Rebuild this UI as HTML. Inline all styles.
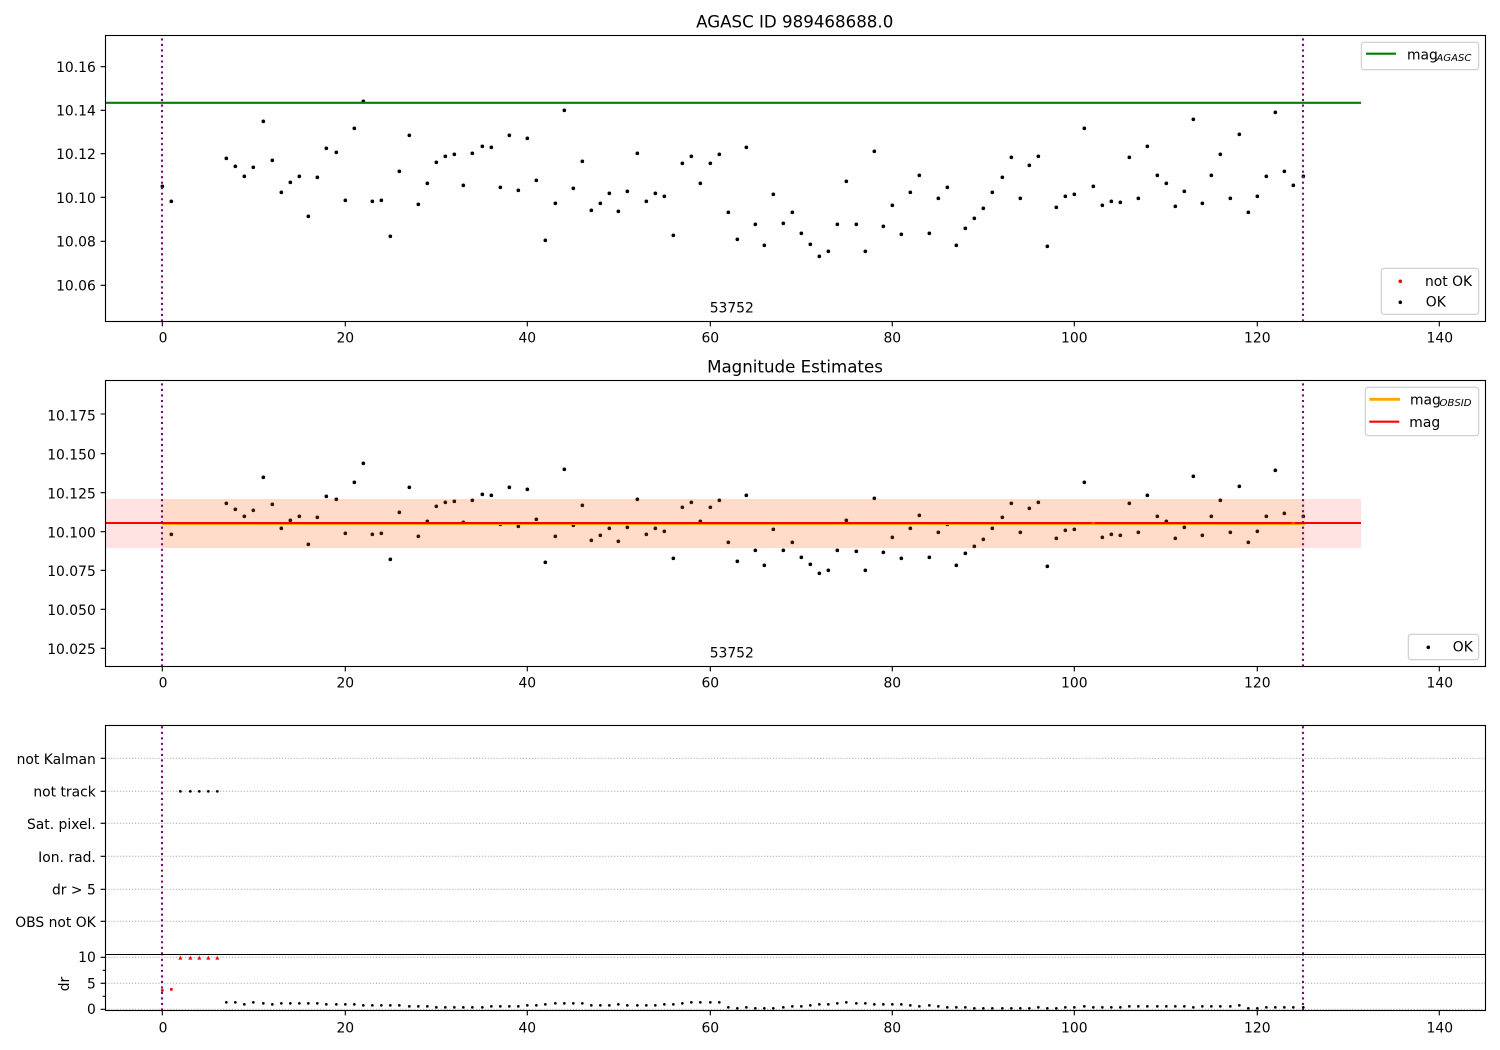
<!DOCTYPE html>
<html>
<head>
<meta charset="utf-8">
<style>
html,body{margin:0;padding:0;background:#fff;}
svg{display:block;}
text{font-family:"DejaVu Sans","Liberation Sans",sans-serif;font-size:13.89px;fill:#000;}
.t{font-size:16.67px;text-anchor:middle;}
.x{text-anchor:middle;}
.y{text-anchor:end;}
.s{font-size:10.1px;font-style:italic;}
.d{fill:none;stroke:#000;stroke-linecap:round;stroke-width:11;}
.d2{fill:none;stroke:#000;stroke-linecap:round;stroke-width:8;}
.r2{fill:none;stroke:#f00;stroke-linecap:round;stroke-width:9;}
.sp{fill:none;stroke:#000;stroke-width:1.11;}
.tk{fill:none;stroke:#000;stroke-width:1.11;}
.g{fill:none;stroke:#b0b0b0;stroke-width:1.11;stroke-dasharray:1.11 1.83;}
.v{fill:none;stroke:#800080;stroke-width:2.08;stroke-dasharray:2.08 3.43;}
.lg{fill:#fff;fill-opacity:.8;stroke:#ccc;stroke-width:1.11;}
</style>
</head>
<body>
<svg width="1500" height="1050" viewBox="0 0 1500 1050" xmlns="http://www.w3.org/2000/svg">
<rect width="1500" height="1050" fill="#fff"/>

<!-- TOP PANEL -->
<g transform="scale(.33333)"><path class="d" d="M487 559h0M514 604h0M679 475h0M706 499h0M733 529h0M760 502h0M790 364h0M817 481h0M844 577h0M871 547h0M898 529h0M925 649h0M952 532h0M979 445h0M1009 457h0M1036 601h0M1063 385h0M1090 304h0M1117 604h0M1144 601h0M1171 709h0M1198 514h0M1228 406h0M1255 613h0M1282 550h0M1309 487h0M1336 469h0M1363 463h0M1390 556h0M1417 460h0M1447 439h0M1474 442h0M1501 562h0"/></g>
<g transform="translate(500,0) scale(.33333)"><path class="d" d="M28 406h0M55 571h0M82 415h0M109 541h0M136 721h0M166 610h0M193 331h0M220 565h0M247 484h0M274 631h0M301 610h0M328 580h0M355 634h0M382 574h0M412 460h0M439 604h0M466 580h0M493 589h0M520 706h0M547 490h0M574 469h0M601 550h0M631 490h0M658 463h0M685 637h0M712 718h0M739 442h0M766 673h0M793 736h0M820 583h0M850 670h0M877 637h0M904 700h0M931 733h0M958 769h0M985 754h0M1012 673h0M1039 544h0M1069 673h0M1096 754h0M1123 454h0M1150 679h0M1177 616h0M1204 703h0M1231 577h0M1258 526h0M1288 700h0M1315 595h0M1342 562h0M1369 736h0M1396 685h0M1423 655h0M1450 625h0M1477 577h0"/></g>
<g transform="translate(1000,0) scale(.33333)"><path class="d" d="M7 532h0M34 472h0M61 595h0M88 496h0M115 469h0M142 739h0M169 622h0M196 589h0M223 583h0M253 385h0M280 559h0M307 616h0M334 604h0M361 607h0M388 472h0M415 595h0M442 439h0M472 526h0M499 550h0M526 619h0M553 574h0M580 358h0M607 610h0M634 526h0M661 463h0M691 595h0M718 403h0M745 637h0M772 589h0M799 529h0M826 337h0M853 514h0M880 556h0M910 529h0"/></g>
<path d="M105.5 102.8H1361" stroke="#008000" stroke-width="2.08" fill="none"/>
<path class="v" d="M162 321.5V35.5M1303 321.5V35.5"/>
<rect class="sp" x="105.5" y="35.5" width="1380" height="286"/>
<path class="tk" d="M100.6 66.7h4.9M100.6 110.3h4.9M100.6 153.7h4.9M100.6 197.3h4.9M100.6 241.3h4.9M100.6 285.3h4.9M162.3 321.5v4.9M345.3 321.5v4.9M527.3 321.5v4.9M710.3 321.5v4.9M892.3 321.5v4.9M1074.3 321.5v4.9M1257.3 321.5v4.9M1439.3 321.5v4.9"/>
<text class="y" x="95.8" y="72">10.16</text>
<text class="y" x="95.8" y="115.5">10.14</text>
<text class="y" x="95.8" y="159">10.12</text>
<text class="y" x="95.8" y="203">10.10</text>
<text class="y" x="95.8" y="246.5">10.08</text>
<text class="y" x="95.8" y="290.5">10.06</text>
<text class="x" x="163" y="342.7">0</text>
<text class="x" x="345.3" y="342.7">20</text>
<text class="x" x="527.3" y="342.7">40</text>
<text class="x" x="710.3" y="342.7">60</text>
<text class="x" x="892.3" y="342.7">80</text>
<text class="x" x="1074.3" y="342.7">100</text>
<text class="x" x="1257.3" y="342.7">120</text>
<text class="x" x="1439.8" y="342.7">140</text>
<text class="t" x="794.7" y="27.3">AGASC ID 989468688.0</text>
<text x="709.7" y="312.3">53752</text>
<rect class="lg" x="1361.3" y="42.3" width="117.4" height="27.4" rx="2.8"/>
<path d="M1366 53.7h30" stroke="#008000" stroke-width="2.08" fill="none"/>
<text x="1407" y="59.3">mag</text>
<text class="s" x="1436.4" y="60.8">AGASC</text>
<rect class="lg" x="1381.3" y="268.3" width="97.4" height="46" rx="2.8"/>
<circle cx="1400.3" cy="281.3" r="1.8" fill="#f00"/>
<circle cx="1400.3" cy="302.3" r="1.8" fill="#000"/>
<text x="1425" y="285.8">not OK</text>
<text x="1425.8" y="306.5">OK</text>

<!-- MIDDLE PANEL -->
<g transform="translate(0,350) scale(.33333)"><path class="d" d="M514 553h0M679 460h0M706 478h0M733 499h0M760 481h0M790 382h0M817 463h0M844 535h0M871 511h0M898 499h0M925 583h0M952 502h0M979 439h0M1009 448h0M1036 550h0M1063 397h0M1090 340h0M1117 553h0M1144 550h0M1171 628h0M1198 487h0M1228 412h0M1255 559h0M1282 514h0M1309 469h0M1336 457h0M1363 454h0M1390 517h0M1417 451h0M1447 433h0M1474 436h0M1501 523h0"/></g>
<g transform="translate(500,350) scale(.33333)"><path class="d" d="M28 412h0M55 529h0M82 418h0M109 508h0M136 637h0M166 559h0M193 358h0M220 526h0M247 466h0M274 571h0M301 556h0M328 535h0M355 574h0M382 532h0M412 448h0M439 553h0M466 535h0M493 544h0M520 625h0M547 472h0M574 457h0M601 514h0M631 472h0M658 451h0M685 577h0M712 634h0M739 436h0M766 601h0M793 646h0M820 538h0M850 601h0M877 577h0M904 622h0M931 643h0M958 670h0M985 661h0M1012 601h0M1039 511h0M1069 604h0M1096 661h0M1123 445h0M1150 607h0M1177 562h0M1204 625h0M1231 535h0M1258 496h0M1288 622h0M1315 547h0M1342 523h0M1369 646h0M1396 610h0M1423 589h0M1450 568h0M1477 535h0"/></g>
<g transform="translate(1000,350) scale(.33333)"><path class="d" d="M7 502h0M34 460h0M61 547h0M88 475h0M115 457h0M142 649h0M169 565h0M196 541h0M223 538h0M253 397h0M307 562h0M334 553h0M361 556h0M388 460h0M415 547h0M442 436h0M472 499h0M499 514h0M526 565h0M553 532h0M580 379h0M607 556h0M634 499h0M661 451h0M691 547h0M718 409h0M745 577h0M772 544h0M799 499h0M826 361h0M853 490h0M910 499h0"/></g>
<rect x="105.5" y="499" width="1255.5" height="49" fill="#ff0000" fill-opacity=".115"/>
<rect x="162" y="499" width="1143" height="49" fill="#ffa500" fill-opacity=".105"/>
<path d="M162 523.9H1305" stroke="#ffa500" stroke-width="2.08" fill="none"/>
<path d="M105.5 523H1361" stroke="#f00" stroke-width="2.08" fill="none"/>
<circle cx="1093.3" cy="523.5" r="1.7" fill="#ffa500" fill-opacity=".45"/>
<circle cx="1293.3" cy="523.5" r="1.7" fill="#ffa500" fill-opacity=".45"/>
<path class="v" d="M162 666.5V380.5M1303 666.5V380.5"/>
<rect class="sp" x="105.5" y="380.5" width="1380" height="286"/>
<path class="tk" d="M100.6 414h4.9M100.6 453.7h4.9M100.6 492.7h4.9M100.6 531.7h4.9M100.6 570.3h4.9M100.6 609.3h4.9M100.6 648.3h4.9M162.3 666.5v4.9M345.3 666.5v4.9M527.3 666.5v4.9M710.3 666.5v4.9M892.3 666.5v4.9M1074.3 666.5v4.9M1257.3 666.5v4.9M1439.3 666.5v4.9"/>
<text class="y" x="95.8" y="420.5">10.175</text>
<text class="y" x="95.8" y="459.5">10.150</text>
<text class="y" x="95.8" y="498.5">10.125</text>
<text class="y" x="95.8" y="537.5">10.100</text>
<text class="y" x="95.8" y="576">10.075</text>
<text class="y" x="95.8" y="615">10.050</text>
<text class="y" x="95.8" y="654">10.025</text>
<text class="x" x="163" y="687.5">0</text>
<text class="x" x="345.3" y="687.5">20</text>
<text class="x" x="527.3" y="687.5">40</text>
<text class="x" x="710.3" y="687.5">60</text>
<text class="x" x="892.3" y="687.5">80</text>
<text class="x" x="1074.3" y="687.5">100</text>
<text class="x" x="1257.3" y="687.5">120</text>
<text class="x" x="1439.8" y="687.5">140</text>
<text class="t" x="795" y="372.5">Magnitude Estimates</text>
<text x="709.7" y="657.3">53752</text>
<rect class="lg" x="1365.3" y="387.3" width="113.4" height="48.4" rx="2.8"/>
<path d="M1369.3 399.3h30.7" stroke="#ffa500" stroke-width="2.8" fill="none"/>
<path d="M1369.3 421.7h30" stroke="#f00" stroke-width="2.08" fill="none"/>
<text x="1410" y="404.3">mag</text>
<text class="s" x="1439.5" y="405.8">OBSID</text>
<text x="1409.3" y="427">mag</text>
<rect class="lg" x="1408.3" y="634.3" width="70.4" height="25.4" rx="2.8"/>
<circle cx="1428.3" cy="647.3" r="1.8" fill="#000"/>
<text x="1452.8" y="651.5">OK</text>

<!-- BOTTOM PANEL -->
<path class="g" d="M105.5 758.3H1485.5M105.5 791.3H1485.5M105.5 823.3H1485.5M105.5 856.3H1485.5M105.5 889.3H1485.5M105.5 921.3H1485.5M105.5 957.3H1485.5M105.5 983.3H1485.5M105.5 1009.3H1485.5"/>
<g transform="translate(0,710) scale(.33333)">
<path class="d2" d="M541 244h0M571 244h0M598 244h0M625 244h0M652 244h0"/>
<path class="r2" d="M487 841h0M514 838h0"/>
<path fill="#f00" d="M535 749l6-12 6 12zM565 749l6-12 6 12zM592 749l6-12 6 12zM619 749l6-12 6 12zM646 749l6-12 6 12z"/>
<path class="d2" d="M679 877h0M706 877h0M733 883h0M760 877h0M790 880h0M817 883h0M844 880h0M871 880h0M898 880h0M925 880h0M952 880h0M979 883h0M1009 883h0M1036 883h0M1063 883h0M1090 886h0M1117 886h0M1144 886h0M1171 886h0M1198 886h0M1228 889h0M1255 889h0M1282 889h0M1309 892h0M1336 892h0M1363 892h0M1390 892h0M1417 892h0M1447 892h0M1474 889h0M1501 889h0"/>
</g>
<g transform="translate(500,940) scale(.33333)"><path class="d2" d="M28 199h0M55 199h0M82 196h0M109 196h0M136 193h0M166 190h0M193 190h0M220 190h0M247 190h0M274 196h0M301 196h0M328 196h0M355 193h0M382 196h0M412 196h0M439 196h0M466 196h0M493 193h0M520 193h0M547 190h0M574 187h0M601 187h0M631 187h0M658 187h0M685 202h0M712 205h0M739 202h0M766 205h0M793 205h0M820 205h0M850 202h0M877 199h0M904 199h0M931 196h0M958 193h0M985 193h0M1012 190h0M1039 187h0M1069 190h0M1096 190h0M1123 193h0M1150 193h0M1177 193h0M1204 193h0M1231 196h0M1258 199h0M1288 196h0M1315 199h0M1342 202h0M1369 202h0M1396 202h0M1423 205h0M1450 205h0M1477 205h0"/></g>
<g transform="translate(1000,710) scale(.33333)"><path class="d2" d="M7 895h0M34 895h0M61 895h0M88 895h0M115 892h0M142 895h0M169 895h0M196 892h0M223 892h0M253 889h0M280 892h0M307 892h0M334 892h0M361 892h0M388 889h0M415 889h0M442 889h0M472 889h0M499 889h0M526 889h0M553 889h0M580 892h0M607 889h0M634 889h0M661 889h0M691 889h0M718 886h0M745 895h0M772 895h0M799 892h0M826 892h0M853 892h0M880 892h0M910 892h0"/></g>
<path class="v" d="M162 954.3V725.5M162 1010.5V954.3M1303 954.3V725.5M1303 1010.5V954.3"/>
<rect class="sp" x="105.5" y="725.5" width="1380" height="285"/>
<path d="M105 954.5H1486" stroke="#000" stroke-width="1.11" fill="none"/>
<path class="tk" d="M100.6 758.3h4.9M100.6 791.3h4.9M100.6 823.3h4.9M100.6 856.3h4.9M100.6 889.3h4.9M100.6 921.3h4.9M100.6 957.3h4.9M100.6 983.3h4.9M100.6 1009.3h4.9M102.7 970.3h2.8M102.7 996.3h2.8M162.3 1010.5v4.9M345.3 1010.5v4.9M527.3 1010.5v4.9M710.3 1010.5v4.9M892.3 1010.5v4.9M1074.3 1010.5v4.9M1257.3 1010.5v4.9M1439.3 1010.5v4.9"/>
<text class="y" x="95.8" y="764">not Kalman</text>
<text class="y" x="95.8" y="796.5">not track</text>
<text class="y" x="95.8" y="829">Sat. pixel.</text>
<text class="y" x="95.8" y="862">Ion. rad.</text>
<text class="y" x="95.8" y="894.5">dr &gt; 5</text>
<text class="y" x="95.8" y="927">OBS not OK</text>
<text class="y" x="95.8" y="962">10</text>
<text class="y" x="95.8" y="988.5">5</text>
<text class="y" x="95.8" y="1014">0</text>
<text x="69" y="984" text-anchor="middle" transform="rotate(-90 69 984)">dr</text>
<text class="x" x="163" y="1032.3">0</text>
<text class="x" x="345.3" y="1032.3">20</text>
<text class="x" x="527.3" y="1032.3">40</text>
<text class="x" x="710.3" y="1032.3">60</text>
<text class="x" x="892.3" y="1032.3">80</text>
<text class="x" x="1074.3" y="1032.3">100</text>
<text class="x" x="1257.3" y="1032.3">120</text>
<text class="x" x="1439.8" y="1032.3">140</text>
</svg>
</body>
</html>
